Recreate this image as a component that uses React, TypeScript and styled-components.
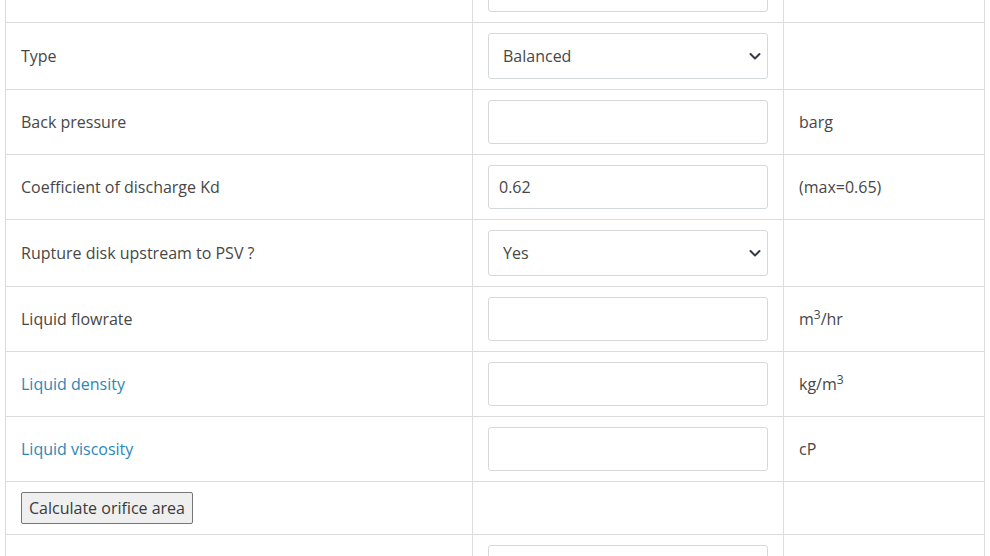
import React from "react";
import styled, { createGlobalStyle } from "styled-components";

const GlobalStyle = createGlobalStyle`
  html, body {
    margin: 0;
    padding: 0;
    background: #fff;
    overflow: hidden;
  }
  body {
    font-family: "Open Sans", "Noto Sans", sans-serif;
    font-size: 16px;
    color: #474747;
  }
`;

type Row =
  | { kind: "input"; label: string; link?: boolean; value?: string; unit?: React.ReactNode }
  | { kind: "select"; label: string; value: string; unit?: React.ReactNode }
  | { kind: "button"; label: string };

// first and last rows are scrolled mostly out of view, only their inputs peek in
const rows: Row[] = [
  { kind: "input", label: "" },
  { kind: "select", label: "Type", value: "Balanced" },
  { kind: "input", label: "Back pressure", unit: "barg" },
  { kind: "input", label: "Coefficient of discharge Kd", value: "0.62", unit: "(max=0.65)" },
  { kind: "select", label: "Rupture disk upstream to PSV ?", value: "Yes" },
  {
    kind: "input",
    label: "Liquid flowrate",
    unit: (
      <>
        m<sup>3</sup>/hr
      </>
    ),
  },
  {
    kind: "input",
    label: "Liquid density",
    link: true,
    unit: (
      <>
        kg/m<sup>3</sup>
      </>
    ),
  },
  { kind: "input", label: "Liquid viscosity", link: true, unit: "cP" },
  { kind: "button", label: "Calculate orifice area" },
  { kind: "input", label: "" },
];

export default function App() {
  return (
    <>
      <GlobalStyle />
      <Page>
        <Table>
          <colgroup>
            <col style={{ width: 467 }} />
            <col style={{ width: 311 }} />
            <col style={{ width: 201 }} />
          </colgroup>
          <tbody>
            {rows.map((row, i) => (
              <tr key={i}>
                {row.kind === "button" ? (
                  <>
                    <Cell>
                      <CalcButton>{row.label}</CalcButton>
                    </Cell>
                    <Cell />
                    <Cell />
                  </>
                ) : (
                  <>
                    <Cell>{row.kind === "input" && row.link ? <LabelLink href="#">{row.label}</LabelLink> : row.label}</Cell>
                    <Cell>
                      {row.kind === "select" ? (
                        <SelectWrap>
                          <Select defaultValue={row.value}>
                            <option>{row.value}</option>
                          </Select>
                          <Chevron viewBox="0 0 16 16">
                            <path d="M3.5 6l4.5 4.5L12.5 6" fill="none" stroke="#343a40" strokeWidth="2" strokeLinecap="round" strokeLinejoin="round" />
                          </Chevron>
                        </SelectWrap>
                      ) : (
                        <Input defaultValue={row.value ?? ""} />
                      )}
                    </Cell>
                    <Cell>{row.unit}</Cell>
                  </>
                )}
              </tr>
            ))}
          </tbody>
        </Table>
      </Page>
    </>
  );
}

const Page = styled.div`
  padding: 0 5px;
  height: 556px;
  overflow: hidden;
`;

const Table = styled.table`
  width: 979px;
  margin-top: -43px;
  border-collapse: collapse;
  table-layout: fixed;
`;

const Cell = styled.td`
  border: 1px solid #dcdcdc;
  padding: 10px 15px;
  vertical-align: middle;
  line-height: 24px;

  sup {
    font-size: 12px;
    line-height: 0;
    vertical-align: 6px;
  }
`;

const LabelLink = styled.a`
  color: #2b87b8;
  text-decoration: none;
`;

const Input = styled.input`
  box-sizing: border-box;
  display: block;
  width: 280px;
  height: 44px;
  padding: 6px 10px;
  border: 1px solid #d6d9dc;
  border-radius: 3px;
  font-family: "Open Sans", "Noto Sans", sans-serif;
  font-size: 16px;
  color: #474747;
  background: #fff;
  outline: none;
`;

const SelectWrap = styled.div`
  position: relative;
  width: 280px;
`;

const Select = styled.select`
  box-sizing: border-box;
  display: block;
  width: 280px;
  height: 46px;
  padding: 6px 36px 6px 14px;
  border: 1px solid #d6d9dc;
  border-radius: 3px;
  font-family: "Open Sans", "Noto Sans", sans-serif;
  font-size: 16px;
  color: #474747;
  background: #fff;
  appearance: none;
  outline: none;
`;

const Chevron = styled.svg`
  position: absolute;
  right: 5px;
  top: 15px;
  width: 16px;
  height: 16px;
  pointer-events: none;
`;

const CalcButton = styled.button`
  font-family: "Open Sans", "Noto Sans", sans-serif;
  font-size: 16px;
  color: #3a3a3a;
  background: #efefef;
  border: 1px solid #767676;
  border-radius: 2px;
  padding: 3px 7px;
  line-height: 24px;
`;
